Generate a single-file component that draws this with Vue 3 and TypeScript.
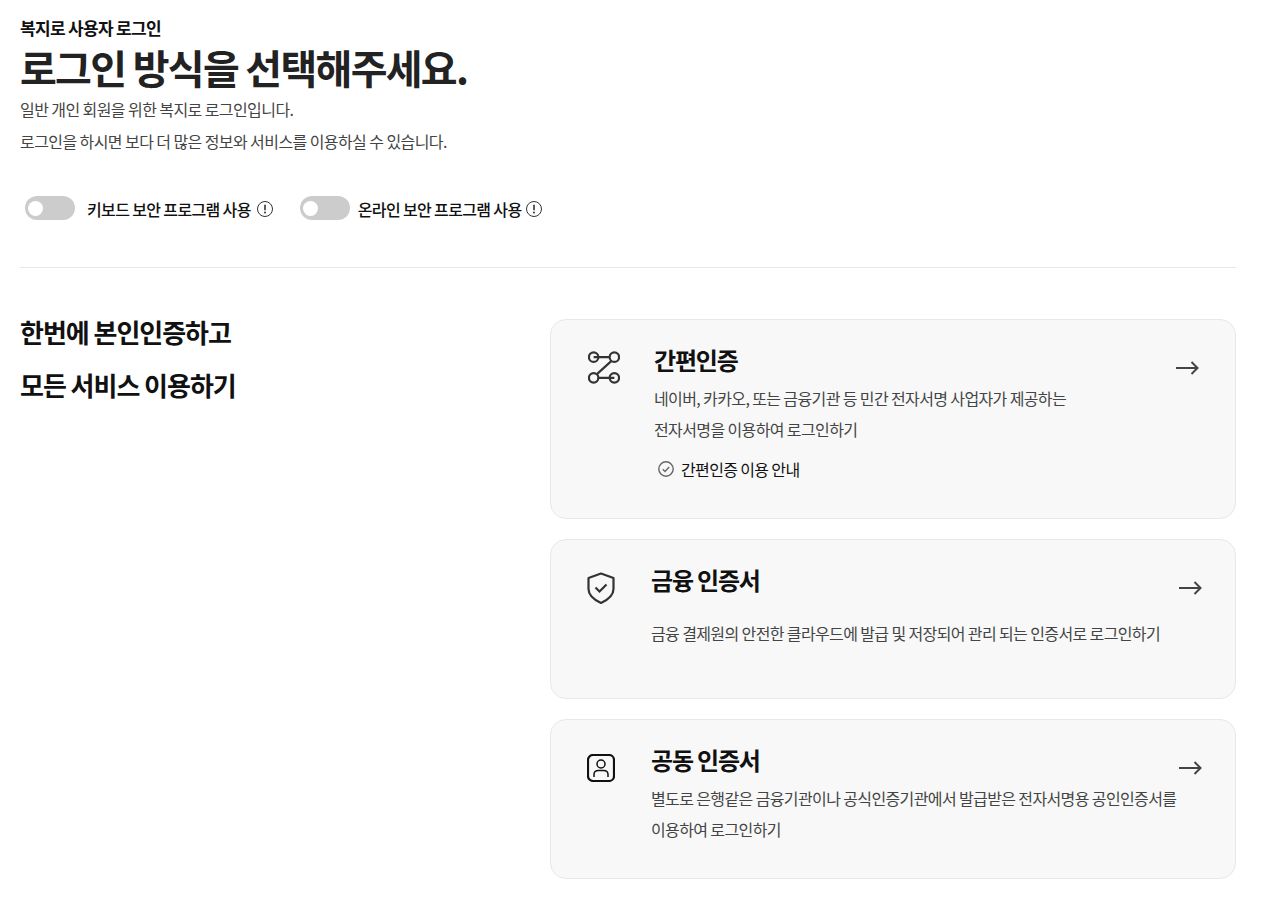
<script setup lang="ts">
interface Toggle {
  label: string;
}

const toggles: Toggle[] = [
  { label: "키보드 보안 프로그램 사용" },
  { label: "온라인 보안 프로그램 사용" },
];
</script>

<template>
  <div class="page">
    <header class="head">
      <p class="eyebrow">복지로 사용자 로그인</p>
      <h1 class="title">로그인 방식을 선택해주세요.</h1>
      <p class="desc">일반 개인 회원을 위한 복지로 로그인입니다.</p>
      <p class="desc">로그인을 하시면 보다 더 많은 정보와 서비스를 이용하실 수 있습니다.</p>
    </header>

    <div class="toggles">
      <div v-for="t in toggles" :key="t.label" class="toggle">
        <span class="switch"><span class="knob"></span></span>
        <span class="toggle-label">{{ t.label }}</span>
        <svg class="info" width="16" height="16" viewBox="0 0 16 16" fill="none">
          <circle cx="8" cy="8" r="7.500" stroke="#333" stroke-width="1" />
          <path d="M8 3.800v5.400" stroke="#333" stroke-width="1.600" />
          <circle cx="8" cy="11.400" r="1" fill="#333" />
        </svg>
      </div>
    </div>

    <main class="body">
      <h2 class="lead">한번에 본인인증하고<br />모든 서비스 이용하기</h2>

      <div class="cards">
        <a class="card card-tall">
          <svg class="icon" width="32" height="33" viewBox="0 0 34 34" fill="none" stroke="#333" stroke-width="2.300">
            <circle cx="6" cy="6" r="5" />
            <circle cx="28" cy="6" r="5" />
            <circle cx="6" cy="28" r="5" />
            <circle cx="28" cy="28" r="5" />
            <path d="M6 6h17M11 28h17M25 10 9.500 24" />
          </svg>
          <div class="info-col">
            <h3 class="card-title">간편인증</h3>
            <p class="card-text">네이버, 카카오, 또는 금융기관 등 민간 전자서명 사업자가 제공하는</p>
            <p class="card-text">전자서명을 이용하여 로그인하기</p>
            <span class="guide">
              <svg width="16" height="16" viewBox="0 0 16 16" fill="none">
                <circle cx="8" cy="8" r="7.200" stroke="#666" stroke-width="1.400" />
                <path d="m4.800 8.200 2.200 2.200 4.200-4.400" stroke="#666" stroke-width="1.400" />
              </svg>
              간편인증 이용 안내
            </span>
          </div>
          <svg class="arrow" width="23" height="14" viewBox="0 0 23 14" fill="none" stroke="#444" stroke-width="2">
            <path d="M0 7h21.500M15.500 1l6 6-6 6" />
          </svg>
        </a>

        <a class="card">
          <svg class="icon icon-small" width="28" height="32" viewBox="0 0 28 32" fill="none" stroke="#333" stroke-width="2.200">
            <path d="M14 1.500 26.500 6v11c0 6.500-5 10.500-12.500 14C6.500 27.500 1.500 23.500 1.500 17V6z" stroke-linejoin="round" />
            <path d="m8.500 15.500 4 4 7-7" />
          </svg>
          <div class="info-col">
            <h3 class="card-title">금융 인증서</h3>
            <p class="card-text gap">금융 결제원의 안전한 클라우드에 발급 및 저장되어 관리 되는 인증서로 로그인하기</p>
          </div>
          <svg class="arrow" width="23" height="14" viewBox="0 0 23 14" fill="none" stroke="#444" stroke-width="2">
            <path d="M0 7h21.500M15.500 1l6 6-6 6" />
          </svg>
        </a>

        <a class="card card-cert">
          <svg class="icon icon-small" width="28" height="28" viewBox="0 0 28 28" fill="none" stroke="#111">
            <rect x="1" y="1" width="26" height="26" rx="5" stroke-width="2.200" />
            <circle cx="14" cy="10" r="4" stroke-width="1.500" />
            <path d="M7 23v-2.500c0-2.500 2-4 4.500-4h5c2.500 0 4.500 1.500 4.500 4V23" stroke-width="1.500" />
          </svg>
          <div class="info-col">
            <h3 class="card-title">공동 인증서</h3>
            <p class="card-text">별도로 은행같은 금융기관이나 공식인증기관에서 발급받은 전자서명용 공인인증서를</p>
            <p class="card-text">이용하여 로그인하기</p>
          </div>
          <svg class="arrow" width="23" height="14" viewBox="0 0 23 14" fill="none" stroke="#444" stroke-width="2">
            <path d="M0 7h21.500M15.500 1l6 6-6 6" />
          </svg>
        </a>
      </div>
    </main>
  </div>
</template>

<style scoped>
.page {
  width: 1216px;
  padding: 15px 0 0 20px;
  font-family: "Noto Sans CJK KR", "Noto Sans", sans-serif;
  color: #222;
}

.eyebrow {
  margin: 0;
  font-size: 17px;
  line-height: 26px;
  font-weight: 700;
  letter-spacing: -0.68px;
  color: #111;
}

.title {
  margin: 0;
  font-size: 40px;
  line-height: 52px;
  font-weight: 700;
  letter-spacing: -1.7px;
  color: #222;
}

.desc {
  margin: 0;
  font-size: 16px;
  line-height: 32px;
  letter-spacing: -0.58px;
  color: #444;
}

.toggles {
  display: flex;
  gap: 27px;
  height: 24px;
  padding: 0 0 47px 5px;
  margin-top: 39px;
  border-bottom: 1px solid #e8e8e8;
}

.toggle {
  display: flex;
  align-items: center;
  height: 24px;
}

.switch {
  display: flex;
  align-items: center;
  width: 50px;
  height: 24px;
  padding-left: 3px;
  box-sizing: border-box;
  border-radius: 12px;
  background: #ccc;
}

.knob {
  width: 15px;
  height: 15px;
  border-radius: 50%;
  background: #fff;
}

.toggle-label {
  margin: 2px 0 0 12px;
  font-size: 16px;
  font-weight: 500;
  letter-spacing: -0.64px;
  color: #111;
}

.toggle + .toggle .toggle-label {
  margin-left: 8px;
}

.info {
  margin: 2px 0 0 6px;
}

.toggle + .toggle .info {
  margin-left: 4px;
}

.body {
  display: flex;
  justify-content: space-between;
  align-items: flex-start;
  padding-top: 37px;
}

.lead {
  margin: 0;
  font-size: 26px;
  line-height: 53px;
  font-weight: 700;
  letter-spacing: -1.04px;
  color: #111;
}

.cards {
  display: flex;
  flex-direction: column;
  gap: 20px;
  width: 686px;
  margin-top: 14px;
}

.card {
  position: relative;
  display: flex;
  height: 160px;
  box-sizing: border-box;
  padding: 17px 0 0 36px;
  border: 1px solid #e8e8e8;
  border-radius: 16px;
  background: #f8f8f8;
}

.card-tall {
  height: 200px;
}

.icon {
  flex: none;
  margin-top: 15px;
}

.icon-small {
  margin-right: 36px;
}

.card-tall .icon {
  margin: 14px 34px 0 1px;
}

.card-cert .icon {
  margin-top: 17px;
}

.card-title {
  margin: 0;
  font-size: 24px;
  line-height: 46px;
  font-weight: 700;
  letter-spacing: -1.2px;
  color: #111;
}

.card-text {
  margin: 0;
  font-size: 16px;
  line-height: 31px;
  letter-spacing: -0.62px;
  color: #444;
}

.gap {
  margin-top: 15px;
}

.guide {
  display: flex;
  align-items: center;
  gap: 7px;
  margin: 8px 0 0 4px;
  font-size: 16px;
  line-height: 32px;
  letter-spacing: -0.64px;
  color: #111;
}

.arrow {
  position: absolute;
  top: 41px;
  right: 33px;
}

.card-tall .arrow {
  right: 36px;
}
</style>
